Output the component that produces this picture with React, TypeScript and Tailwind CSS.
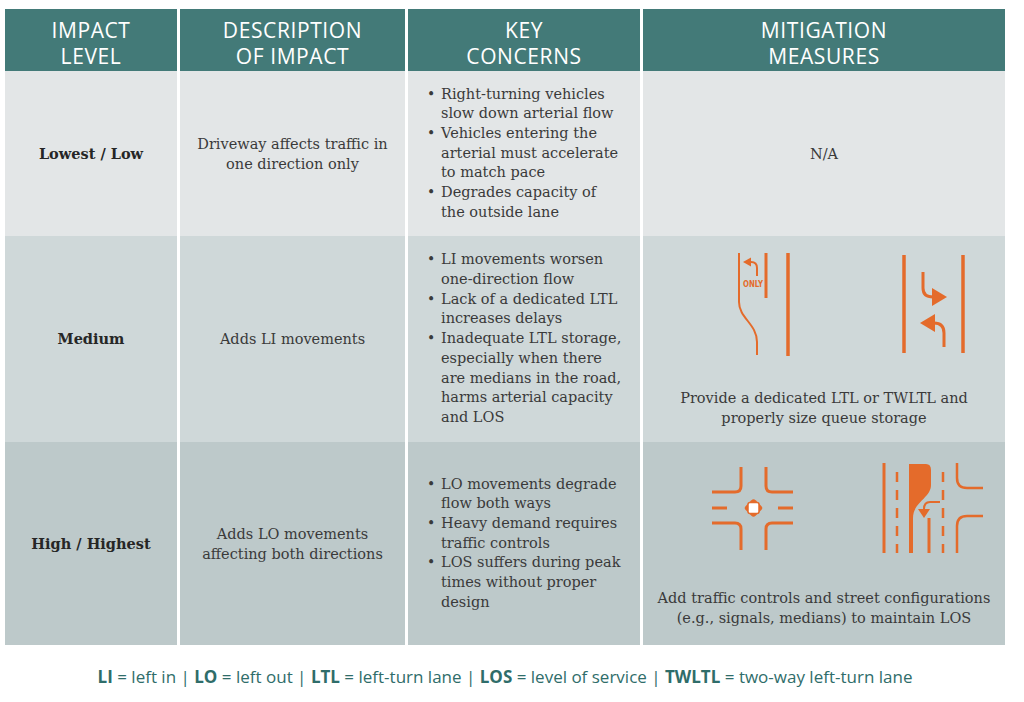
import React from "react";

const ORANGE = "#e46b2b";

const rows = [
  {
    level: "Lowest / Low",
    description: ["Driveway affects traffic in", "one direction only"],
    concerns: [
      ["Right-turning vehicles", "slow down arterial flow"],
      ["Vehicles entering the", "arterial must accelerate", "to match pace"],
      ["Degrades capacity of", "the outside lane"],
    ],
    bg: "bg-[#e3e6e7]",
    height: "h-[165px]",
  },
  {
    level: "Medium",
    description: ["Adds LI movements"],
    concerns: [
      ["LI movements worsen", "one-direction flow"],
      ["Lack of a dedicated LTL", "increases delays"],
      [
        "Inadequate LTL storage,",
        "especially when there",
        "are medians in the road,",
        "harms arterial capacity",
        "and LOS",
      ],
    ],
    bg: "bg-[#cfd8d9]",
    height: "h-[206px]",
  },
  {
    level: "High / Highest",
    description: ["Adds LO movements", "affecting both directions"],
    concerns: [
      ["LO movements degrade", "flow both ways"],
      ["Heavy demand requires", "traffic controls"],
      ["LOS suffers during peak", "times without proper", "design"],
    ],
    bg: "bg-[#bdc9ca]",
    height: "h-[203px]",
  },
];

const headers = [
  ["IMPACT", "LEVEL"],
  ["DESCRIPTION", "OF IMPACT"],
  ["KEY", "CONCERNS"],
  ["MITIGATION", "MEASURES"],
];

// left-turn lane + two-way left-turn lane drawings
const MediumIcons = () => (
  <svg width="362" height="108" viewBox="0 0 362 108" fill="none">
    <g stroke={ORANGE} strokeLinecap="butt">
      <path d="M96 3 V52 C96 68 114 74 114 92 V105" strokeWidth="2" />
      <path d="M123 3 V48" strokeWidth="3" />
      <path d="M145 3 V106" strokeWidth="3.5" />
      <path d="M114 26 V18 Q114 12 108 12" strokeWidth="2" />
      <path d="M261 5 V103" strokeWidth="3.5" />
      <path d="M320 5 V103" strokeWidth="3.5" />
      <path d="M280 22 V38 Q280 47 290 47" strokeWidth="3" />
      <path d="M301 97 V83 Q301 73 291 73" strokeWidth="3" />
    </g>
    <g fill={ORANGE}>
      <polygon points="100,12 108,7.5 108,16.5" />
      <polygon points="304,47 289,38 289,56" />
      <polygon points="277,73 292,64 292,82" />
      <text
        x="110"
        y="37"
        textAnchor="middle"
        fontSize="8"
        fontWeight="bold"
        fontFamily="'DejaVu Sans Condensed', 'DejaVu Sans', sans-serif"
        textLength="20"
        lengthAdjust="spacingAndGlyphs"
      >
        ONLY
      </text>
    </g>
  </svg>
);

// signalized intersection + median with turn lane drawings
const HighIcons = () => (
  <svg width="362" height="96" viewBox="0 0 362 96" fill="none">
    <g stroke={ORANGE} strokeWidth="3">
      <path d="M98 7 V26 Q98 32 92 32 H69" />
      <path d="M123 7 V26 Q123 32 129 32 H150" />
      <path d="M69 63 H92 Q98 63 98 69 V90" />
      <path d="M150 63 H129 Q123 63 123 69 V90" />
      <path d="M69 48 H84" />
      <path d="M135 48 H150" />
      <path d="M241 3 V93" />
      <path d="M254 12 V93" strokeDasharray="10 8" strokeWidth="2.5" />
      <path d="M300 12 V93" strokeDasharray="10 8" strokeWidth="2.5" />
      <path d="M286 58 V93" />
      <path d="M314 3 V18 Q314 28 324 28 H340" strokeWidth="2.5" />
      <path d="M340 56 H324 Q314 56 314 66 V93" strokeWidth="2.5" />
      <path d="M297 42 H287 Q281 42 281 49" strokeWidth="2" />
    </g>
    <g fill={ORANGE}>
      <rect
        x="103.5"
        y="41"
        width="14"
        height="14"
        rx="3"
        transform="rotate(45 110.5 48)"
      />
      <path d="M266 4 H283 Q288 4 288 10 V25 C288 38 270 42 270 58 V93 H266 Z" />
      <polygon points="275,49 287,49 281,58" />
    </g>
    <rect
      x="105"
      y="42.5"
      width="11"
      height="11"
      rx="2"
      fill="#ffffff"
      stroke={ORANGE}
      strokeWidth="1.5"
    />
  </svg>
);

const serif = "font-['DejaVu_Serif',serif]";

export default function App() {
  return (
    <div className="w-[1024px] h-[702px] bg-white pt-[9px] pl-[5px]">
      <div className="grid grid-cols-[172px_225px_232px_362px] gap-x-[3px]">
        {headers.map((h, i) => (
          <div
            key={i}
            className="h-[62px] pt-[5px] bg-[#437a78] flex items-center justify-center text-center text-white text-[21px] leading-[26px] tracking-[0.6px] font-['Open_Sans',sans-serif]"
          >
            <p>
              {h[0]}
              <br />
              {h[1]}
            </p>
          </div>
        ))}

        {rows.map((row, r) => (
          <React.Fragment key={r}>
            <div
              className={`${row.bg} ${row.height} flex items-center justify-center ${serif} text-[14.5px] font-bold text-[#262626]`}
            >
              {row.level}
            </div>
            <div
              className={`${row.bg} ${row.height} flex flex-col items-center justify-center ${serif} text-[14.5px] leading-[20px] text-[#3a3a3a] text-center`}
            >
              {row.description.map((line, i) => (
                <span key={i}>{line}</span>
              ))}
            </div>
            <div
              className={`${row.bg} ${row.height} flex flex-col justify-center pl-[19px] ${serif} text-[14.5px] leading-[19.7px] text-[#3a3a3a]`}
            >
              {row.concerns.map((item, i) => (
                <div key={i} className="flex">
                  <span className="w-[14px] text-[14px]">•</span>
                  <div className="flex flex-col whitespace-nowrap">
                    {item.map((line, j) => (
                      <span key={j}>{line}</span>
                    ))}
                  </div>
                </div>
              ))}
            </div>
            <div
              className={`${row.bg} ${row.height} flex flex-col items-center justify-center ${serif} text-[14.5px] leading-[20px] text-[#3a3a3a] text-center`}
            >
              {r === 0 && <span>N/A</span>}
              {r === 1 && (
                <>
                  <MediumIcons />
                  <div className="mt-[30px] flex flex-col">
                    <span>Provide a dedicated LTL or TWLTL and</span>
                    <span>properly size queue storage</span>
                  </div>
                </>
              )}
              {r === 2 && (
                <>
                  <HighIcons />
                  <div className="mt-[32px] flex flex-col">
                    <span>Add traffic controls and street configurations</span>
                    <span>(e.g., signals, medians) to maintain LOS</span>
                  </div>
                </>
              )}
            </div>
          </React.Fragment>
        ))}
      </div>

      <p className="mt-[20px] w-[1000px] text-center text-[17px] leading-[24px] text-[#2f6d6a] font-['Open_Sans',sans-serif]">
        <b>LI</b> = left in | <b>LO</b> = left out | <b>LTL</b> = left-turn lane |{" "}
        <b>LOS</b> = level of service | <b>TWLTL</b> = two-way left-turn lane
      </p>
    </div>
  );
}
